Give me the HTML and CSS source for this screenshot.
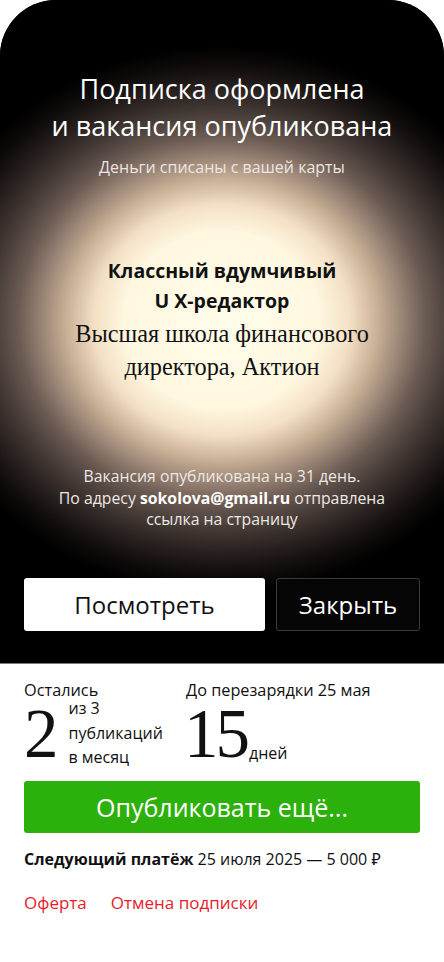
FILE: index.html
```html
<!DOCTYPE html>
<html lang="ru">
<head>
<meta charset="utf-8">
<title>Подписка оформлена</title>
<link rel="stylesheet" href="styles.css">
</head>
<body>
<div class="sheet">
  <h1 class="title">Подписка оформлена<br>и вакансия опубликована</h1>
  <p class="subtitle">Деньги списаны с вашей карты</p>
  <p class="job">Классный вдумчивый<br>U X-редактор</p>
  <p class="company">Высшая школа финансового<br>директора, Актион</p>
  <p class="desc">Вакансия опубликована на 31 день.<br>По адресу <b>sokolova@gmail.ru</b> отправлена<br>ссылка на страницу</p>
  <div class="actions">
    <button class="btn btn-light">Посмотреть</button>
    <button class="btn btn-dark">Закрыть</button>
  </div>
</div>
<div class="info">
  <div class="stats">
    <div class="stat">
      <div class="stat-label">Остались</div>
      <div class="stat-row">
        <span class="big">2</span>
        <span class="side">из 3<br>публикаций<br>в месяц</span>
      </div>
    </div>
    <div class="stat">
      <div class="stat-label">До перезарядки 25 мая</div>
      <div class="stat-row">
        <span class="big big-days">15</span>
        <span class="side side-days">дней</span>
      </div>
    </div>
  </div>
  <button class="btn btn-green">Опубликовать ещё...</button>
  <p class="payment"><b>Следующий платёж</b> 25 июля 2025 — 5 000 ₽</p>
  <div class="links">
    <a class="link" href="#">Оферта</a>
    <a class="link" href="#">Отмена подписки</a>
  </div>
</div>
</body>
</html>
```
FILE: styles.css
```css
* { box-sizing: border-box; }
html, body { margin: 0; padding: 0; background: #fff; }
body {
  font-family: "Open Sans", "Noto Sans", sans-serif;
  width: 444px;
}
p, h1 { margin: 0; }
.sheet {
  height: 664px;
  border-radius: 56px 56px 0 0;
  border-bottom: 1px solid #7a7a7a;
  background:
    radial-gradient(ellipse 305px 275px at 222px 320px,
      #fffdea 0%,
      #fff7e0 32%,
      #f3e0c4 42%,
      #c9b096 51%,
      #9a8576 59%,
      #6a5a52 67%,
      #443a36 76%,
      #261f1d 85%,
      #0e0b0a 93%,
      #000 100%);
  background-color: #000;
  color: #fff;
  text-align: center;
  padding: 70px 20px 0;
  display: flex;
  flex-direction: column;
  align-items: center;
}
.title {
  font-weight: 400;
  font-size: 27px;
  line-height: 37px;
}
.subtitle {
  margin-top: 13px;
  font-size: 16px;
  line-height: 21px;
  color: #ece6e2;
}
.job {
  margin-top: 78px;
  color: #111;
  font-weight: 700;
  font-size: 19.5px;
  line-height: 30px;
}
.company {
  margin-top: 1px;
  color: #111;
  font-family: "Liberation Serif", serif;
  font-size: 24.3px;
  line-height: 33px;
}
.desc {
  margin-top: 83px;
  font-size: 15.8px;
  line-height: 21.5px;
  color: #eee8e4;
}
.desc b { color: #fff; }
.actions {
  margin-top: 47px;
  width: 100%;
  padding: 0 4px;
  display: flex;
  gap: 11px;
}
.btn {
  font-family: "Open Sans", "Noto Sans", sans-serif;
  border-radius: 3px;
  height: 53px;
  font-size: 24px;
  cursor: pointer;
  padding: 0;
}
.btn-light {
  flex: 0 0 241px;
  background: #fff;
  color: #111;
  border: none;
}
.btn-dark {
  flex: 1;
  background: #050505;
  color: #fff;
  border: 1px solid #3a3a3a;
}
.info {
  padding: 17px 24px 0;
  color: #111;
}
.stats {
  display: grid;
  grid-template-columns: 162px 1fr;
}
.stat-label {
  font-size: 16.3px;
  line-height: 18px;
}
.stat-row {
  display: flex;
  align-items: flex-start;
}
.big {
  font-family: "Liberation Serif", serif;
  font-size: 69px;
  line-height: 58px;
  height: 58px;
  margin-top: 6px;
}
.big-days { letter-spacing: -3px; margin-left: -2px; }
.side {
  font-size: 16px;
  line-height: 24.5px;
  margin-left: 10px;
  margin-top: -3px;
}
.side-days { margin-left: 2px; margin-top: 42px; }
.btn-green {
  display: block;
  margin-top: 11px;
  width: 100%;
  height: 52px;
  border: none;
  background: #2cb00b;
  color: #fff;
  font-size: 25px;
}
.payment {
  margin-top: 15px;
  font-size: 16px;
  line-height: 22px;
}
.links {
  margin-top: 22px;
  display: flex;
  gap: 24px;
}
.link {
  color: #e8202e;
  font-size: 17px;
  line-height: 22px;
  text-decoration: none;
}
```
